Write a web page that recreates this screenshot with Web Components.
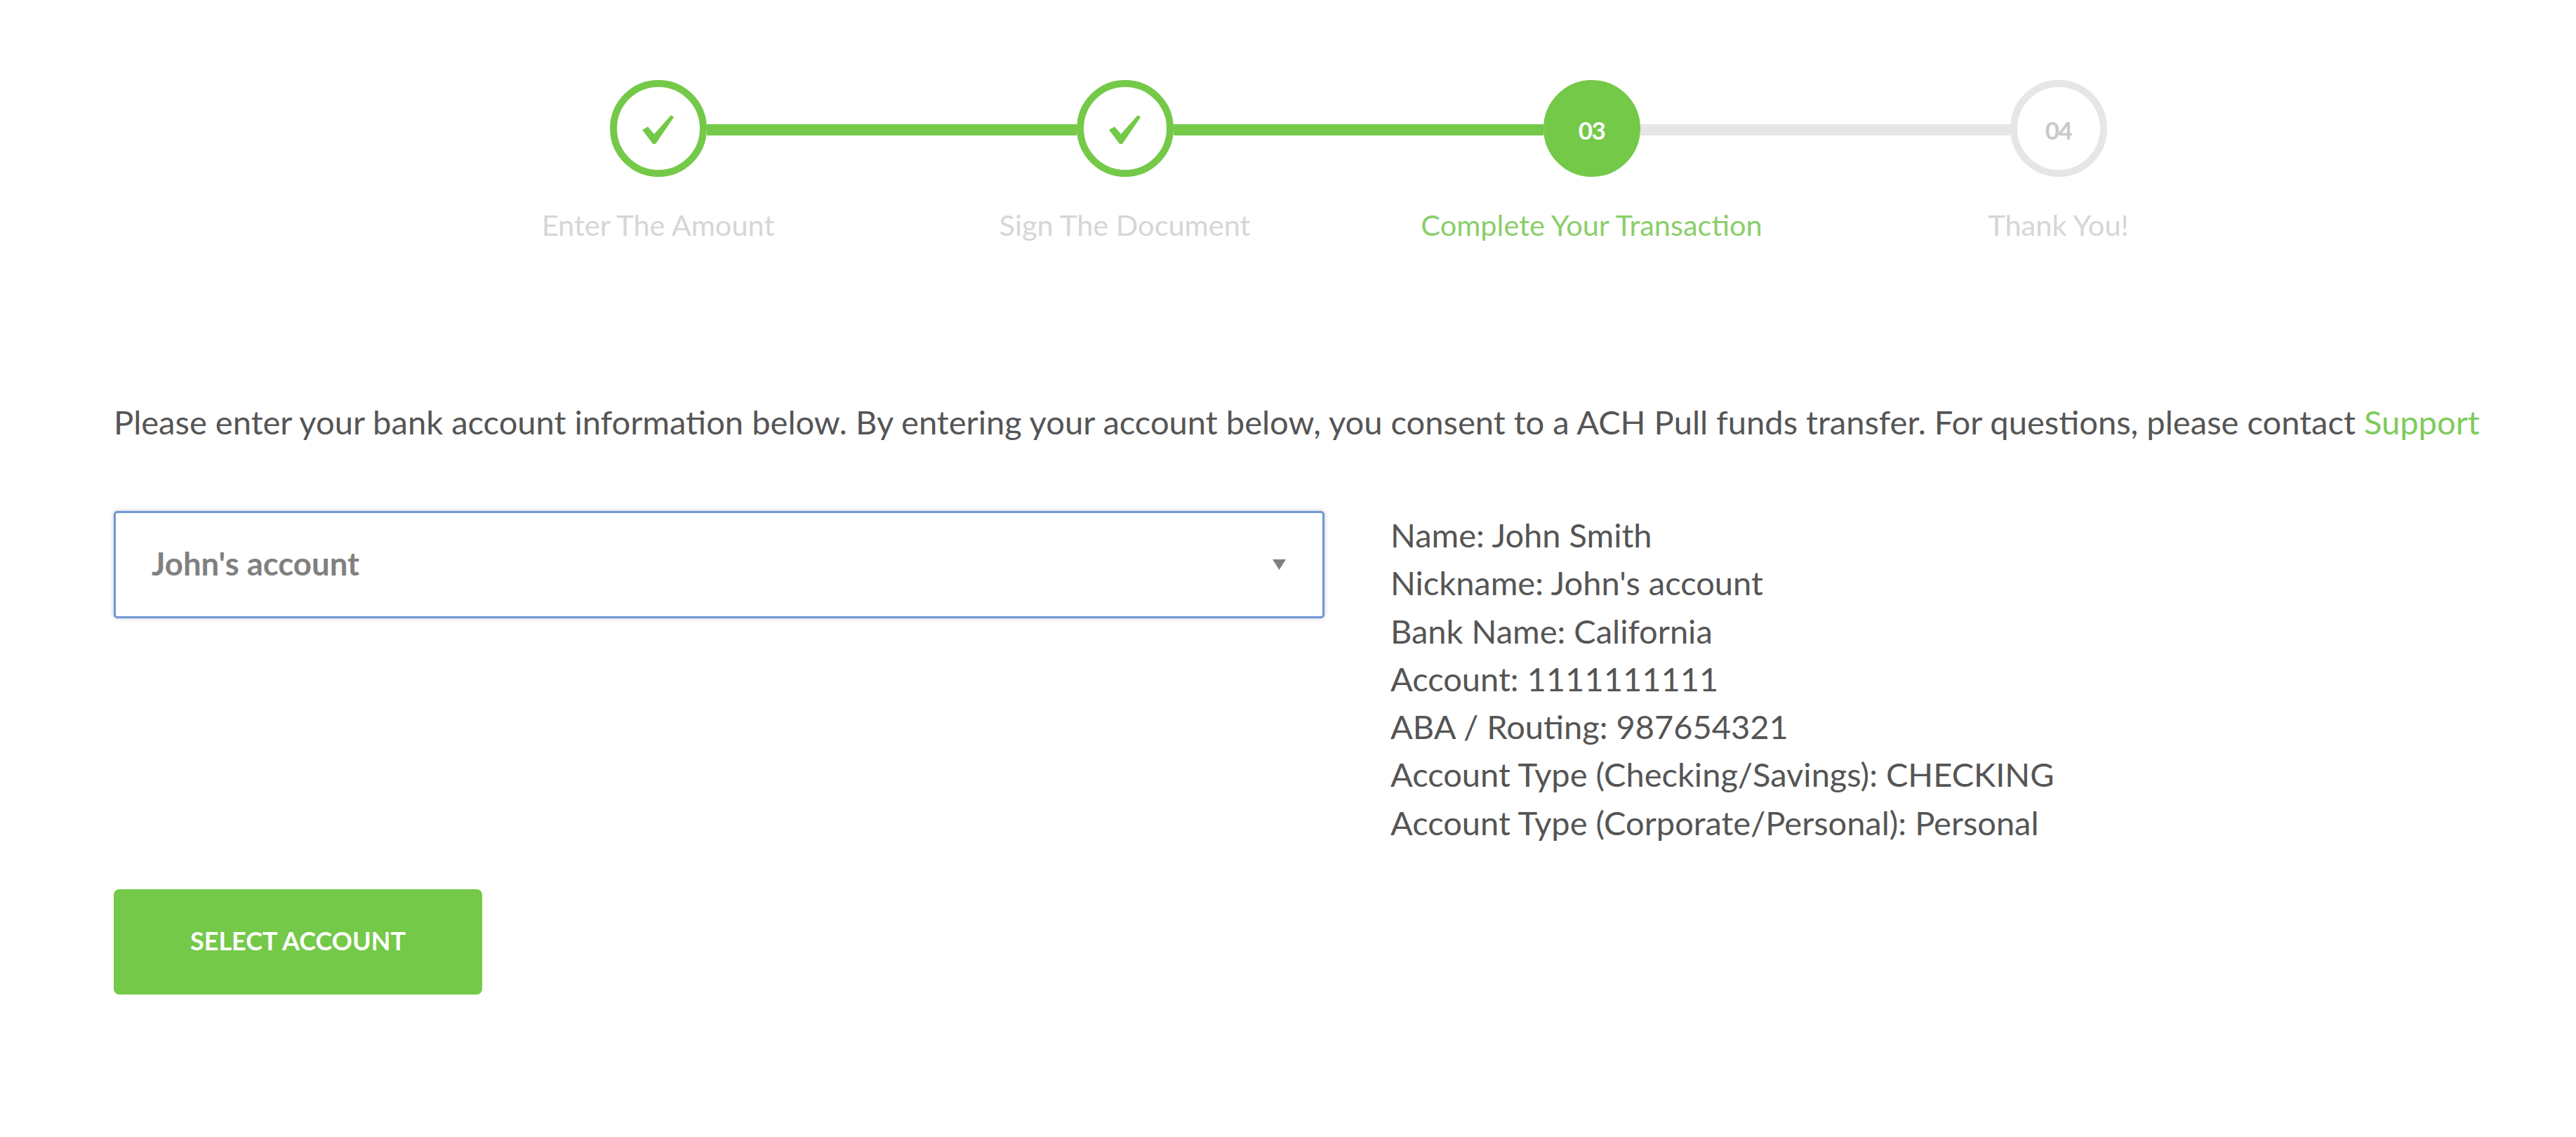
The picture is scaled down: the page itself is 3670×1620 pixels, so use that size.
<!DOCTYPE html>
<html>
<head>
<meta charset="utf-8">
<title>Bank account</title>
<style>
  body {
    margin: 0;
    background: #fff;
    font-family: "Lato", "Noto Sans", sans-serif;
    color: #555;
  }
</style>
</head>
<body>
<ach-page>
  <step-bar>
    <step-item state="done" first>Enter The Amount</step-item>
    <step-item state="done">Sign The Document</step-item>
    <step-item state="active" num="03">Complete Your Transaction</step-item>
    <step-item state="todo" num="04" last>Thank You!</step-item>
  </step-bar>
  <p slot="intro">Please enter your bank account information below. By entering your account below, you consent to a ACH Pull funds transfer. For questions, please contact <a href="#">Support</a></p>
  <account-select slot="select">John's account</account-select>
  <account-details slot="details">
    <div>Name: John Smith</div>
    <div>Nickname: John's account</div>
    <div>Bank Name: California</div>
    <div>Account: 1111111111</div>
    <div>ABA / Routing: 987654321</div>
    <div>Account Type (Checking/Savings): CHECKING</div>
    <div>Account Type (Corporate/Personal): Personal</div>
  </account-details>
  <green-button slot="action">SELECT ACCOUNT</green-button>
</ach-page>

<script>
(function () {
  const GREEN = "#74c948";

  const CHECK = `<svg width="45" height="41" viewBox="0 0 45 41"><path fill="${GREEN}" d="M0 21L8 16.5L17 27L41 0L45 3L19 41H15Z"/></svg>`;

  class AchPage extends HTMLElement {
    constructor() {
      super();
      this.attachShadow({ mode: "open" }).innerHTML = `
        <style>
          :host { display: block; padding: 114px 100px 0 162px; }
          .intro { margin-top: 217px; font-size: 47.1px; line-height: 68px; }
          ::slotted(p) { margin: 0; white-space: nowrap; }
          .row { display: grid; grid-template-columns: 1725px 1fr; column-gap: 94px; margin-top: 93px; }
          .action { margin-top: 61px; }
        </style>
        <slot></slot>
        <div class="intro"><slot name="intro"></slot></div>
        <div class="row">
          <slot name="select"></slot>
          <slot name="details"></slot>
        </div>
        <div class="action"><slot name="action"></slot></div>
      `;
    }
  }

  class StepBar extends HTMLElement {
    constructor() {
      super();
      this.attachShadow({ mode: "open" }).innerHTML = `
        <style>
          :host { display: grid; grid-template-columns: repeat(4, 665px); margin-left: 443px; }
        </style>
        <slot></slot>
      `;
    }
  }

  class StepItem extends HTMLElement {
    constructor() {
      super();
      const state = this.getAttribute("state");
      const leftOn = state !== "todo";
      const rightOn = state === "done";
      this.attachShadow({ mode: "open" }).innerHTML = `
        <style>
          :host { display: block; text-align: center; font-size: 41.5px; line-height: 60px; color: ${state === "active" ? "#8bce6b" : "#d6d6d6"}; }
          .head { display: flex; align-items: center; height: 138px; margin-bottom: 38px; }
          .line { flex: 1; height: 16px; margin-top: 4px; background: #e6e6e6; }
          .line.on { background: ${GREEN}; }
          .line.off { visibility: hidden; }
          .dot {
            box-sizing: border-box; flex: none; width: 138px; height: 138px; border-radius: 50%;
            display: flex; align-items: center; justify-content: center;
            padding-top: 3px;
            border: 10px solid ${state === "todo" ? "#e6e6e6" : GREEN};
            background: ${state === "active" ? GREEN : "#fff"};
            color: ${state === "active" ? "#fff" : "#c9c9c9"};
            font-size: 35px; font-weight: 700; letter-spacing: -1.5px;
          }
        </style>
        <div class="head">
          <span class="line ${this.hasAttribute("first") ? "off" : leftOn ? "on" : ""}"></span>
          <span class="dot">${state === "done" ? CHECK : this.getAttribute("num")}</span>
          <span class="line ${this.hasAttribute("last") ? "off" : rightOn ? "on" : ""}"></span>
        </div>
        <slot></slot>
      `;
    }
  }

  class AccountSelect extends HTMLElement {
    constructor() {
      super();
      this.attachShadow({ mode: "open" }).innerHTML = `
        <style>
          :host {
            box-sizing: border-box; display: flex; align-items: center; justify-content: space-between;
            height: 153px; padding: 0 52px 0 51px;
            border: 3px solid #6f96d6; border-radius: 5px;
            box-shadow: 0 0 6px rgba(0, 0, 0, .22);
            font-size: 45.5px; font-weight: 700; color: #808080;
          }
          span { margin-bottom: 5px; }
          svg { display: block; }
        </style>
        <span><slot></slot></span>
        <svg width="19" height="15" viewBox="0 0 19 15"><path fill="#808080" d="M0 0H19L9.5 15Z"/></svg>
      `;
    }
  }

  class AccountDetails extends HTMLElement {
    constructor() {
      super();
      this.attachShadow({ mode: "open" }).innerHTML = `
        <style>
          :host { display: block; font-size: 47px; line-height: 68.3px; }
        </style>
        <slot></slot>
      `;
    }
  }

  class GreenButton extends HTMLElement {
    constructor() {
      super();
      this.attachShadow({ mode: "open" }).innerHTML = `
        <style>
          :host {
            box-sizing: border-box; display: flex; align-items: center; justify-content: center;
            width: 525px; height: 150px; padding-bottom: 4px; border-radius: 8px;
            background: ${GREEN}; color: #fff; font-size: 36px; font-weight: 700;
          }
        </style>
        <slot></slot>
      `;
    }
  }

  // links live in the page's light DOM, so colour comes from here
  document.querySelector("a").style.cssText = "color:" + "#7fcb5c" + ";text-decoration:none";

  customElements.define("ach-page", AchPage);
  customElements.define("step-bar", StepBar);
  customElements.define("step-item", StepItem);
  customElements.define("account-select", AccountSelect);
  customElements.define("account-details", AccountDetails);
  customElements.define("green-button", GreenButton);
})();
</script>
</body>
</html>
